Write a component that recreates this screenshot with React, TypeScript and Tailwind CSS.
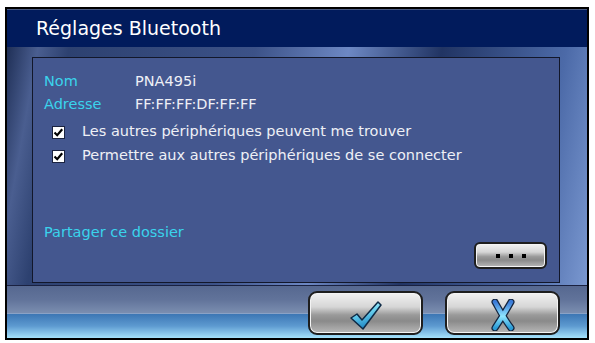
import React from 'react';

const font = { fontFamily: '"DejaVu Sans", Verdana, sans-serif' };

function CheckBox() {
  return (
    <svg width="13" height="13" viewBox="0 0 13 13" className="shrink-0">
      <rect x="0.5" y="0.5" width="12" height="12" fill="#ffffff" stroke="#1b2340" />
      <path d="M2.5 6.5 L5.2 9.2 L10.2 3.3" fill="none" stroke="#000000" strokeWidth="2.2" />
    </svg>
  );
}

function OkIcon() {
  return (
    <svg width="34" height="30" viewBox="0 0 34 30">
      <defs>
        <linearGradient id="okg" x1="0" y1="0" x2="0.3" y2="1">
          <stop offset="0%" stopColor="#e6fbff" />
          <stop offset="45%" stopColor="#6fd6f2" />
          <stop offset="100%" stopColor="#1d86c4" />
        </linearGradient>
      </defs>
      <polygon
        points="2,17 8,13 13,19 29,1 32,4 14,28"
        fill="url(#okg)"
        stroke="#0e2a46"
        strokeWidth="1.5"
        strokeLinejoin="round"
      />
    </svg>
  );
}

function CancelIcon() {
  return (
    <svg width="26" height="32" viewBox="0 0 26 32">
      <defs>
        <linearGradient id="xg" x1="0" y1="0" x2="0" y2="1">
          <stop offset="0%" stopColor="#3a7ad8" />
          <stop offset="55%" stopColor="#8fe6ff" />
          <stop offset="100%" stopColor="#2a9bd6" />
        </linearGradient>
      </defs>
      <path d="M5 3 C9 10 14 20 21 29 M21 3 C17 10 11 20 5 29" fill="none" stroke="#14243e" strokeWidth="7" strokeLinecap="round" />
      <path d="M5 3 C9 10 14 20 21 29 M21 3 C17 10 11 20 5 29" fill="none" stroke="url(#xg)" strokeWidth="4.5" strokeLinecap="round" />
    </svg>
  );
}

function GlossButton({ className, children }: { className: string; children: React.ReactNode }) {
  return (
    <div
      className={`relative flex items-center justify-center border-2 border-[#1e1e1e] shadow-[inset_0_0_0_1px_#f4f4f4] bg-[linear-gradient(180deg,#f2f2f2_0%,#d6d6d6_35%,#9a9a9a_55%,#8a8a8a_70%,#b8b8b8_100%)] ${className}`}
    >
      {children}
    </div>
  );
}

export default function App() {
  return (
    <div className="w-[595px] h-[343px] bg-white" style={font}>
      <div className="ml-[5px] pt-[7px] w-[584px]">
        <div className="h-[333px] border-2 border-black flex flex-col">
          {/* title */}
          <div className="h-[38px] bg-[#011b5c] border-t border-[#4a5a82] flex items-center pl-[29px]">
            <span className="text-[19px] text-white leading-none">Réglages Bluetooth</span>
          </div>

          {/* middle */}
          <div className="flex-1 pt-[10px] pl-[25px] pr-[27px] pb-[2px] bg-[linear-gradient(100deg,#1f2f56_0%,#4a5e90_5%,#2d4170_10%,#3c5288_40%,#6d88c4_55%,#213463_70%,#4c6aa8_90%,#7a98d0_100%)]">
            <div className="h-full border border-[#12172a] bg-[#44578f] flex flex-col pl-[11px] pr-[11px] pt-[14px] pb-[13px]">
              <div className="flex h-[20px] items-center text-[14.5px]">
                <span className="w-[91px] text-[#3ad3ec]">Nom</span>
                <span className="text-[#eef0f6]">PNA495i</span>
              </div>
              <div className="flex h-[20px] items-center text-[14.5px] mt-[3px]">
                <span className="w-[91px] text-[#3ad3ec]">Adresse</span>
                <span className="text-[#eef0f6]">FF:FF:FF:DF:FF:FF</span>
              </div>
              <div className="flex h-[20px] items-center gap-[17px] text-[14.5px] text-[#eef0f6] mt-[7px] pl-[8px]">
                <CheckBox />
                <span>Les autres périphériques peuvent me trouver</span>
              </div>
              <div className="flex h-[20px] items-center gap-[17px] text-[14.5px] text-[#eef0f6] mt-[4px] pl-[8px]">
                <CheckBox />
                <span>Permettre aux autres périphériques de se connecter</span>
              </div>
              <div className="flex-1" />
              <div className="h-[16px] flex items-center text-[14.5px] text-[#3ad3ec]">Partager ce dossier</div>
              <div className="flex justify-end mt-[1px] pr-[1px]">
                <GlossButton className="w-[73px] h-[27px] rounded-[6px] gap-[9px]">
                  <span className="w-[4px] h-[4px] bg-black" />
                  <span className="w-[4px] h-[4px] bg-black" />
                  <span className="w-[4px] h-[4px] bg-black" />
                </GlossButton>
              </div>
            </div>
          </div>

          {/* bottom */}
          <div className="h-[53px] border-t border-[#1a2140] flex flex-col relative">
            <div className="h-[27px] bg-[linear-gradient(180deg,#566890_0%,#61739a_50%,#7b8eb0_100%)]" />
            <div className="flex-1 border-t border-[#8aa2c6] bg-[linear-gradient(180deg,#3c76b4_0%,#5d9ad0_50%,#a5e2fb_100%)]" />
            <div className="absolute inset-0 flex justify-end items-center gap-[22px] pr-[27px] pt-[1px]">
              <GlossButton className="w-[115px] h-[44px] rounded-[9px]">
                <div className="mt-[6px]">
                  <OkIcon />
                </div>
              </GlossButton>
              <GlossButton className="w-[115px] h-[44px] rounded-[9px]">
                <div className="mt-[4px]">
                  <CancelIcon />
                </div>
              </GlossButton>
            </div>
          </div>
        </div>
      </div>
    </div>
  );
}
